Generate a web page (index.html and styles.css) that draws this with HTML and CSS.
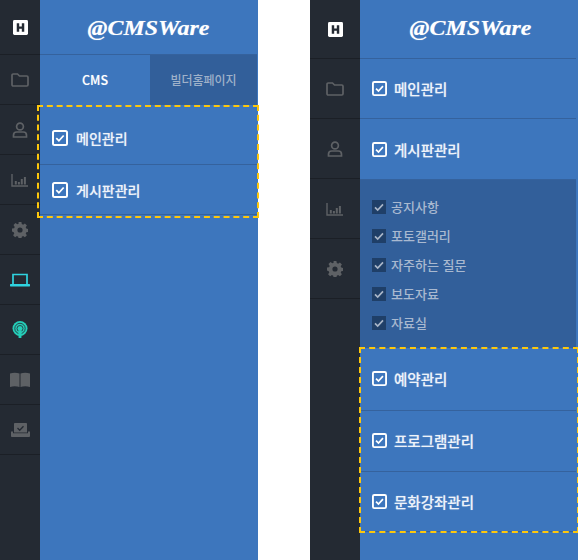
FILE: index.html
```html
<!DOCTYPE html>
<html lang="ko">

<head>
    <meta charset="UTF-8">
    <title>CMSWare 메뉴</title>
    <link rel="stylesheet" href="styles.css">
</head>

<body>
    <svg class="icon-defs" width="0" height="0">
        <symbol id="i-h" viewBox="0 0 16 16">
            <rect width="16" height="16" rx="1.5" fill="#fff" />
            <path d="M4 3.500h2.600v3.300h2.800V3.500H12v9H9.400V9.200H6.600v3.300H4z" fill="#242a33" />
        </symbol>
        <symbol id="i-folder" viewBox="0 0 18 14">
            <path d="M1 2.200C1 1.500 1.500 1 2.200 1h4.300l2 2h7.300c.7 0 1.200.5 1.200 1.200v7.600c0 .7-.5 1.200-1.200 1.200H2.200C1.500 13 1 12.500 1 11.800z" fill="none" stroke="#5e6165" stroke-width="1.700" />
        </symbol>
        <symbol id="i-user" viewBox="0 0 16 16">
            <circle cx="8" cy="4.500" r="3.400" fill="none" stroke="#5e6165" stroke-width="1.700" />
            <path d="M1.500 15v-1.800c0-1.800 1.400-3.200 3.200-3.200h6.600c1.800 0 3.200 1.400 3.200 3.200V15z" fill="none" stroke="#5e6165" stroke-width="1.700" />
        </symbol>
        <symbol id="i-chart" viewBox="0 0 18 14">
            <path d="M1 1v12h16" fill="none" stroke="#5e6165" stroke-width="1.400" />
            <path d="M3.800 8h2v3.600h-2zM6.900 9h2v2.600h-2zM9.800 6h2v5.600h-2zM12.900 4h2v7.600h-2z" fill="#5e6165" />
        </symbol>
        <symbol id="i-gear" viewBox="0 0 16 16">
            <path fill-rule="evenodd" d="M6.600 0h2.800l.4 2.100 1.300.6L12.900 1.500l2 2-1.200 1.800.6 1.300 2.100.4v2.800l-2.100.4-.6 1.300 1.200 1.800-2 2-1.800-1.200-1.300.6-.4 2.100H6.600l-.4-2.100-1.300-.6-1.800 1.200-2-2 1.200-1.800-.6-1.300L0 9.400V6.600l2.100-.4.6-1.300L1.500 3.100l2-2 1.800 1.200 1.300-.6zM8 5.400a2.600 2.600 0 1 0 0 5.200 2.600 2.600 0 0 0 0-5.200z" fill="#5e6165" />
        </symbol>
        <symbol id="i-laptop" viewBox="0 0 20 14">
            <path d="M3 11V1.500h14V11" fill="none" stroke="#2fd3e0" stroke-width="1.700" />
            <rect y="11" width="20" height="2.400" rx=".6" fill="#2fd3e0" />
        </symbol>
        <symbol id="i-cast" viewBox="0 0 16 17">
            <circle cx="8" cy="7.500" r="7.500" fill="#25cdb8" />
            <circle cx="8" cy="7.500" r="5.200" fill="none" stroke="#242a33" stroke-width=".8" />
            <circle cx="8" cy="7.500" r="3" fill="none" stroke="#242a33" stroke-width=".8" />
            <path d="M6.200 9.500h3.600l-.4 7.500H6.600z" fill="#25cdb8" />
        </symbol>
        <symbol id="i-book" viewBox="0 0 20 15">
            <path d="M0 1.500C3 .6 6.500.6 9.500 1.500V15C6.500 14.100 3 14.100 0 15zM10.500 1.500c3-.9 6.500-.9 9.500 0V15c-3-.9-6.500-.9-9.500 0z" fill="#5e6165" />
        </symbol>
        <symbol id="i-inbox" viewBox="0 0 19 14">
            <path d="M3 1c0-.5.400-1 1-1h11c.6 0 1 .5 1 1v8.500H3z" fill="#5e6165" />
            <path d="M0 8.500h2v1.800h15V8.500h2V13c0 .5-.4 1-1 1H1c-.6 0-1-.5-1-1z" fill="#5e6165" />
            <path d="M6.500 5l2.200 2.200 3.800-4" fill="none" stroke="#242a33" stroke-width="1.300" />
        </symbol>
        <symbol id="i-check" viewBox="0 0 16 16">
            <rect x="1" y="1" width="14" height="14" rx="1.500" fill="none" stroke="#fff" stroke-width="2" />
            <path d="M4.300 8.200l2.600 2.600 4.800-5.300" fill="none" stroke="#fff" stroke-width="1.800" />
        </symbol>
        <symbol id="i-subcheck" viewBox="0 0 14 14">
            <rect width="14" height="14" fill="#1f3f68" />
            <path d="M3 7.300l2.700 2.700 5.300-5.600" fill="none" stroke="#a9b6c8" stroke-width="1.700" />
        </symbol>
    </svg>

    <div class="screens">
        <!-- CMS tab view -->
        <section class="panel panel-tabs">
            <nav class="rail">
                <a class="rail-item"><svg class="ic-h"><use href="#i-h" /></svg></a>
                <a class="rail-item"><svg class="ic-folder"><use href="#i-folder" /></svg></a>
                <a class="rail-item"><svg class="ic-user"><use href="#i-user" /></svg></a>
                <a class="rail-item"><svg class="ic-chart"><use href="#i-chart" /></svg></a>
                <a class="rail-item"><svg class="ic-gear"><use href="#i-gear" /></svg></a>
                <a class="rail-item"><svg class="ic-laptop"><use href="#i-laptop" /></svg></a>
                <a class="rail-item"><svg class="ic-cast"><use href="#i-cast" /></svg></a>
                <a class="rail-item"><svg class="ic-book"><use href="#i-book" /></svg></a>
                <a class="rail-item"><svg class="ic-inbox"><use href="#i-inbox" /></svg></a>
            </nav>
            <div class="menu">
                <h1 class="logo"><span class="logo-text">@CMSWare</span></h1>
                <div class="tabs">
                    <a class="tab active">CMS</a>
                    <a class="tab">빌더홈페이지</a>
                </div>
                <ul class="items picked">
                    <li class="item"><svg class="check"><use href="#i-check" /></svg>메인관리</li>
                    <li class="item"><svg class="check"><use href="#i-check" /></svg>게시판관리</li>
                </ul>
            </div>
        </section>

        <!-- expanded view -->
        <section class="panel panel-open">
            <nav class="rail">
                <a class="rail-item"><svg class="ic-h"><use href="#i-h" /></svg></a>
                <a class="rail-item"><svg class="ic-folder"><use href="#i-folder" /></svg></a>
                <a class="rail-item"><svg class="ic-user"><use href="#i-user" /></svg></a>
                <a class="rail-item"><svg class="ic-chart"><use href="#i-chart" /></svg></a>
                <a class="rail-item"><svg class="ic-gear"><use href="#i-gear" /></svg></a>
            </nav>
            <div class="menu">
                <h1 class="logo"><span class="logo-text">@CMSWare</span></h1>
                <ul class="items">
                    <li class="item"><svg class="check"><use href="#i-check" /></svg>메인관리</li>
                    <li class="item"><svg class="check"><use href="#i-check" /></svg>게시판관리</li>
                </ul>
                <ul class="sub">
                    <li class="sub-item"><svg class="subcheck"><use href="#i-subcheck" /></svg>공지사항</li>
                    <li class="sub-item"><svg class="subcheck"><use href="#i-subcheck" /></svg>포토갤러리</li>
                    <li class="sub-item"><svg class="subcheck"><use href="#i-subcheck" /></svg>자주하는 질문</li>
                    <li class="sub-item"><svg class="subcheck"><use href="#i-subcheck" /></svg>보도자료</li>
                    <li class="sub-item"><svg class="subcheck"><use href="#i-subcheck" /></svg>자료실</li>
                </ul>
                <ul class="items picked">
                    <li class="item"><svg class="check"><use href="#i-check" /></svg>예약관리</li>
                    <li class="item"><svg class="check"><use href="#i-check" /></svg>프로그램관리</li>
                    <li class="item"><svg class="check"><use href="#i-check" /></svg>문화강좌관리</li>
                </ul>
            </div>
        </section>
    </div>
</body>

</html>
```

FILE: styles.css
```css
html,
body {
    margin: 0;
    height: 100%;
    background-color: #fff;
}

body {
    font-family: "Noto Sans CJK KR", "Noto Sans", sans-serif;
    overflow: hidden;
}

.icon-defs {
    display: block;
    height: 0;
}

.screens {
    display: flex;
    gap: 52px;
    height: 560px;
}

.panel {
    display: flex;
    height: 560px;
    flex: none;
}

.panel-tabs {
    width: 258px;
}

.panel-open {
    width: 268px;
}

.rail {
    flex: none;
    background-color: #242a33;
    width: 40px;
}

.panel-open .rail {
    width: 50px;
}

.rail-item {
    display: flex;
    align-items: center;
    justify-content: center;
    box-sizing: border-box;
    height: 50px;
    border-bottom: 1px solid #1b1f26;
}

.panel-tabs .rail-item:first-child {
    height: 55px;
}

.panel-open .rail-item {
    height: 60px;
}

.panel-open .rail-item:first-child {
    height: 59px;
}

.ic-h {
    width: 15px;
    height: 15px;
}

.ic-folder {
    width: 18px;
    height: 14px;
}

.ic-user {
    width: 16px;
    height: 16px;
}

.ic-chart {
    width: 18px;
    height: 14px;
}

.ic-gear {
    width: 16px;
    height: 16px;
}

.ic-laptop {
    width: 20px;
    height: 14px;
}

.ic-cast {
    width: 16px;
    height: 17px;
}

.ic-book {
    width: 20px;
    height: 15px;
}

.ic-inbox {
    width: 19px;
    height: 14px;
}

.menu {
    flex: 1;
    min-width: 0;
    background-color: #3d76bd;
}

.logo {
    margin: 0 1px 0 0;
    box-sizing: border-box;
    height: 55px;
    border-bottom: 1px solid #35629d;
    color: #fff;
    font-family: "Liberation Serif", serif;
    font-style: italic;
    font-weight: 700;
    font-size: 21px;
    line-height: 56px;
    text-align: center;
}

/* the logo face is wider than anything installed */
.logo-text {
    display: inline-block;
    transform: scaleX(1.14);
    text-shadow: 0 0 1px rgba(255, 255, 255, 0.5);
}

.panel-open .logo {
    height: 59px;
    line-height: 57px;
    margin-right: 2px;
    padding-left: 5px;
}

.tabs {
    display: flex;
    height: 50px;
    margin-right: 1px;
}

.tab {
    flex: none;
    width: 110px;
    color: #fff;
    font-size: 12.500px;
    font-weight: 500;
    line-height: 50px;
    text-align: center;
    text-shadow: 0 0 1px rgba(255, 255, 255, 0.4);
}

.tab:last-child {
    flex: 1;
    background-color: #325f9a;
    color: #9fb1c9;
    font-size: 12px;
    text-shadow: none;
}

.items {
    margin: 0;
    padding: 0;
    list-style: none;
}

.picked {
    outline: 2px dashed #fdc70c;
    outline-offset: -1px;
}

.panel-tabs .picked {
    margin-left: -2px;
    margin-top: 1px;
    padding: 0 0 2px 2px;
}

.item {
    display: flex;
    align-items: center;
    gap: 8px;
    box-sizing: border-box;
    height: 59px;
    padding: 6px 0 0 12px;
    border-bottom: 1px solid #35629d;
    color: #eef3fa;
    font-size: 14px;
    font-weight: 500;
    text-shadow: 0 0 1px rgba(255, 255, 255, 0.5);
}

.panel-tabs .item {
    margin-right: 1px;
}

.panel-tabs .item + .item {
    height: 50px;
    padding-top: 0;
}

.panel-open .item {
    height: 61px;
    padding: 0 0 0 12px;
    margin-right: 2px;
    gap: 7px;
    font-size: 14.500px;
}

.panel-open .items:not(.picked) .item:first-child {
    height: 60px;
}

.panel-open .picked .item:first-child {
    height: 63px;
    padding-bottom: 2px;
}

.panel-open .picked .item:nth-child(2) {
    padding-bottom: 2px;
}

.panel-open .picked .item:last-child {
    height: 60px;
}

.sub {
    margin: 0 2px 0 0;
    padding: 13px 0 10px 12px;
    background-color: #325f9a;
    list-style: none;
}

.sub-item {
    display: flex;
    align-items: center;
    gap: 5px;
    height: 29px;
    padding-bottom: 2px;
    box-sizing: border-box;
    color: #a9b9d0;
    font-size: 13px;
    font-weight: 500;
}

.check {
    width: 16px;
    height: 16px;
    flex: none;
}

.panel-open .check {
    width: 15px;
    height: 15px;
}

.subcheck {
    width: 14px;
    height: 14px;
    flex: none;
}
```
